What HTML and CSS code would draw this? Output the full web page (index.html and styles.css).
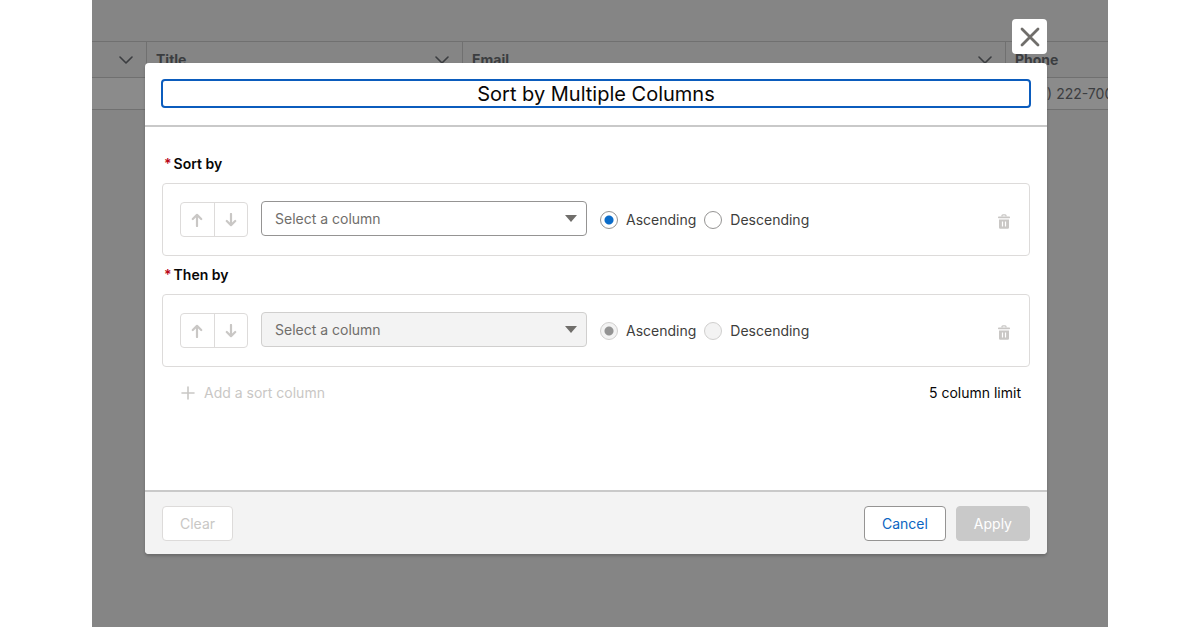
FILE: index.html
```html
<!DOCTYPE html>
<html lang="en">
<head>
  <meta charset="UTF-8">
  <meta name="viewport" content="width=device-width, initial-scale=1">
  <title>Sort by Multiple Columns</title>
  <link rel="stylesheet" href="styles.css">
</head>
<body>

  <svg class="sprite" aria-hidden="true">
    <symbol id="icon-chevron" viewBox="0 0 14 8"><path d="M1 1l6 6 6-6" fill="none" stroke="currentColor" stroke-width="1.6" stroke-linecap="round" stroke-linejoin="round"/></symbol>
    <symbol id="icon-close" viewBox="0 0 20 20"><path d="M2 2l16 16M18 2L2 18" fill="none" stroke="currentColor" stroke-width="2.8" stroke-linecap="round"/></symbol>
    <symbol id="icon-up" viewBox="0 0 12 14"><path d="M6 13V2M1.8 6L6 1.8 10.2 6" fill="none" stroke="currentColor" stroke-width="2.2" stroke-linecap="round" stroke-linejoin="round"/></symbol>
    <symbol id="icon-down" viewBox="0 0 12 14"><path d="M6 1v11M1.8 8L6 12.2 10.2 8" fill="none" stroke="currentColor" stroke-width="2.2" stroke-linecap="round" stroke-linejoin="round"/></symbol>
    <symbol id="icon-plus" viewBox="0 0 14 14"><path d="M7 1v12M1 7h12" fill="none" stroke="currentColor" stroke-width="1.6" stroke-linecap="round"/></symbol>
    <symbol id="icon-trash" viewBox="0 0 12 15"><path d="M4 2.6V1.8Q4 .9 4.9 .9h2.2Q8 .9 8 1.8v.8" fill="none" stroke="currentColor" stroke-width="1.3"/><rect y="2.5" width="12" height="1.8" rx=".7" fill="currentColor"/><path fill="currentColor" fill-rule="evenodd" d="M1 5.5h10v8q0 1.300-1.300 1.300H2.300Q1 14.800 1 13.500zM3.900 7.500v5h1.200v-5zM6.900 7.500v5h1.200v-5z"/></symbol>
  </svg>

  <div class="app">
    <table class="grid">
      <colgroup>
        <col class="col-check">
        <col class="col-title">
        <col>
        <col class="col-phone">
      </colgroup>
      <thead>
        <tr>
          <th><svg class="chevron"><use href="#icon-chevron"/></svg></th>
          <th>Title <svg class="chevron"><use href="#icon-chevron"/></svg></th>
          <th>Email <svg class="chevron"><use href="#icon-chevron"/></svg></th>
          <th>Phone</th>
        </tr>
      </thead>
      <tbody>
        <tr>
          <td></td>
          <td></td>
          <td></td>
          <td>(415) 222-7000</td>
        </tr>
      </tbody>
    </table>

    <div class="modal" role="dialog" aria-labelledby="modal-title">
      <button class="close" aria-label="Close"><svg><use href="#icon-close"/></svg></button>

      <header class="modal-header">
        <h1 id="modal-title" tabindex="-1">Sort by Multiple Columns</h1>
      </header>

      <div class="modal-body">
        <label class="sort-label" for="sort-1"><span class="required">*</span>Sort by</label>
        <div class="sort-row">
          <div class="move">
            <button disabled aria-label="Move up"><svg><use href="#icon-up"/></svg></button>
            <button disabled aria-label="Move down"><svg><use href="#icon-down"/></svg></button>
          </div>
          <div class="select">
            <select id="sort-1"><option>Select a column</option></select>
          </div>
          <div class="order">
            <label><input type="radio" name="order-1" checked>Ascending</label>
            <label><input type="radio" name="order-1">Descending</label>
          </div>
          <button class="trash" disabled aria-label="Delete"><svg><use href="#icon-trash"/></svg></button>
        </div>

        <label class="sort-label" for="sort-2"><span class="required">*</span>Then by</label>
        <div class="sort-row">
          <div class="move">
            <button disabled aria-label="Move up"><svg><use href="#icon-up"/></svg></button>
            <button disabled aria-label="Move down"><svg><use href="#icon-down"/></svg></button>
          </div>
          <div class="select">
            <select id="sort-2" disabled><option>Select a column</option></select>
          </div>
          <div class="order">
            <label><input type="radio" name="order-2" checked disabled>Ascending</label>
            <label><input type="radio" name="order-2" disabled>Descending</label>
          </div>
          <button class="trash" disabled aria-label="Delete"><svg><use href="#icon-trash"/></svg></button>
        </div>

        <div class="add-row">
          <button class="add" disabled><svg><use href="#icon-plus"/></svg>Add a sort column</button>
          <span>5 column limit</span>
        </div>
      </div>

      <footer class="modal-footer">
        <button class="btn" disabled>Clear</button>
        <div class="actions">
          <button class="btn cancel">Cancel</button>
          <button class="btn apply" disabled>Apply</button>
        </div>
      </footer>
    </div>
  </div>

</body>
</html>
```
FILE: styles.css
```css
* { margin: 0; padding: 0; box-sizing: border-box; }
body {
  font-family: Inter, "Liberation Sans", sans-serif;
  font-size: 14px;
  line-height: 20px;
  color: #080707;
  background: #fff;
}
button, select {
  font: inherit;
  color: inherit;
  background: none;
  border: none;
}
svg { display: block; }
.sprite { position: absolute; width: 0; height: 0; }
.app {
  position: relative;
  min-height: 100vh;
  margin: 0 92px;
  padding-top: 41px;
  background: #858585;
  overflow: hidden;
}

/* dimmed list behind the dialog */
.grid {
  width: 100%;
  table-layout: fixed;
  border-collapse: separate;
  border-spacing: 0;
  color: #3b3d40;
}
.grid th, .grid td {
  padding: 0 9px;
  text-align: left;
  white-space: nowrap;
  border-bottom: 1px solid #707070;
}
.grid th {
  height: 37px;
  border-top: 1px solid #707070;
  border-right: 1px solid #707070;
}
.grid th:last-child { border-right: none; }
.grid td { height: 32px; padding: 0 13px; background: #8b8b8b; }
.col-check { width: 55px; }
.col-title { width: 316px; }
.col-phone { width: 102px; }
.chevron { float: right; width: 14px; height: 8px; margin: 6px 4px; }

.modal {
  position: absolute;
  top: 63px;
  left: 53px;
  right: 61px;
  border-radius: 4px;
  background: #fff;
  box-shadow: 0 2px 3px rgba(0, 0, 0, 0.2);
}
.close {
  position: absolute;
  right: 0;
  bottom: calc(100% + 9px);
  display: flex;
  align-items: center;
  justify-content: center;
  width: 35px;
  height: 35px;
  border-radius: 4px;
  color: #706e6b;
  background: #fff;
}
.close svg { width: 20px; height: 20px; }
.modal-header {
  padding: 16px 16px 17px;
  border-bottom: 2px solid #c9c9c9;
}
.modal-header h1 {
  padding-top: 1px;
  font-size: 20px;
  font-weight: 400;
  line-height: 24px;
  text-align: center;
  border: 2px solid #0b5cbd;
  border-radius: 4px;
}

.modal-body { min-height: 363px; padding: 18px 17px; }
.sort-label {
  display: flex;
  gap: 2px;
  padding: 9px 2px;
  font-weight: 600;
}
.required { color: #ba0517; }
.sort-row {
  display: flex;
  align-items: center;
  height: 73px;
  padding: 0 17px;
  border: 1px solid #dddbda;
  border-radius: 4px;
}
.move {
  display: flex;
  width: 68px;
  height: 35px;
  margin-right: 13px;
  border: 1px solid #dddbda;
  border-radius: 4px;
  color: #c9c7c5;
}
.move button {
  flex: 1;
  display: flex;
  align-items: center;
  justify-content: center;
}
.move button + button { border-left: 1px solid #dddbda; }
.move svg { width: 12px; height: 14px; }
.select { position: relative; width: 326px; margin: 0 13px 2px 0; }
.select::after {
  content: "";
  position: absolute;
  top: 14px;
  right: 10px;
  border: 6px solid transparent;
  border-top: 7px solid #706e6b;
  border-bottom: none;
  pointer-events: none;
}
.select select {
  display: block;
  width: 100%;
  height: 35px;
  padding: 0 13px;
  appearance: none;
  color: #706e6b;
  border: 1px solid #959493;
  border-radius: 4px;
}
.select select:disabled {
  color: #706e6b;
  background: #f3f3f3;
  border-color: #d0cfce;
  opacity: 1;
}
.order { display: flex; gap: 8px; color: #3e3e3c; }
.order label { display: flex; align-items: center; gap: 8px; }
.order input {
  width: 18px;
  height: 18px;
  appearance: none;
  border: 1px solid #959493;
  border-radius: 50%;
  background: #fff;
}
.order input:checked { background: radial-gradient(circle, #0b6cc9 4px, #fff 5px); }
.order input:disabled { border-color: #d0cfce; background: #f3f3f3; }
.order input:checked:disabled { background: radial-gradient(circle, #939393 4px, #f3f3f3 5px); }
.trash { margin-left: auto; padding: 3px 2px 0; color: #c9c7c5; }
.trash svg { width: 12px; height: 15px; }
.add-row {
  display: flex;
  justify-content: space-between;
  padding: 16px 9px 0 19px;
}
.add {
  display: flex;
  align-items: center;
  gap: 9px;
  color: #c9c7c5;
}
.add svg { width: 14px; height: 14px; }

.modal-footer {
  display: flex;
  justify-content: space-between;
  padding: 14px 17px 13px;
  border-top: 2px solid #c9c9c9;
  border-radius: 0 0 4px 4px;
  background: #f3f3f3;
}
.actions { display: flex; gap: 10px; }
.btn {
  height: 35px;
  padding: 0 17px;
  color: #c9c7c5;
  background: #fff;
  border: 1px solid #dddbda;
  border-radius: 4px;
}
.cancel { color: #0b65c2; border-color: #959493; }
.apply { color: #fff; background: #c9c9c9; border-color: #c9c9c9; }
```
